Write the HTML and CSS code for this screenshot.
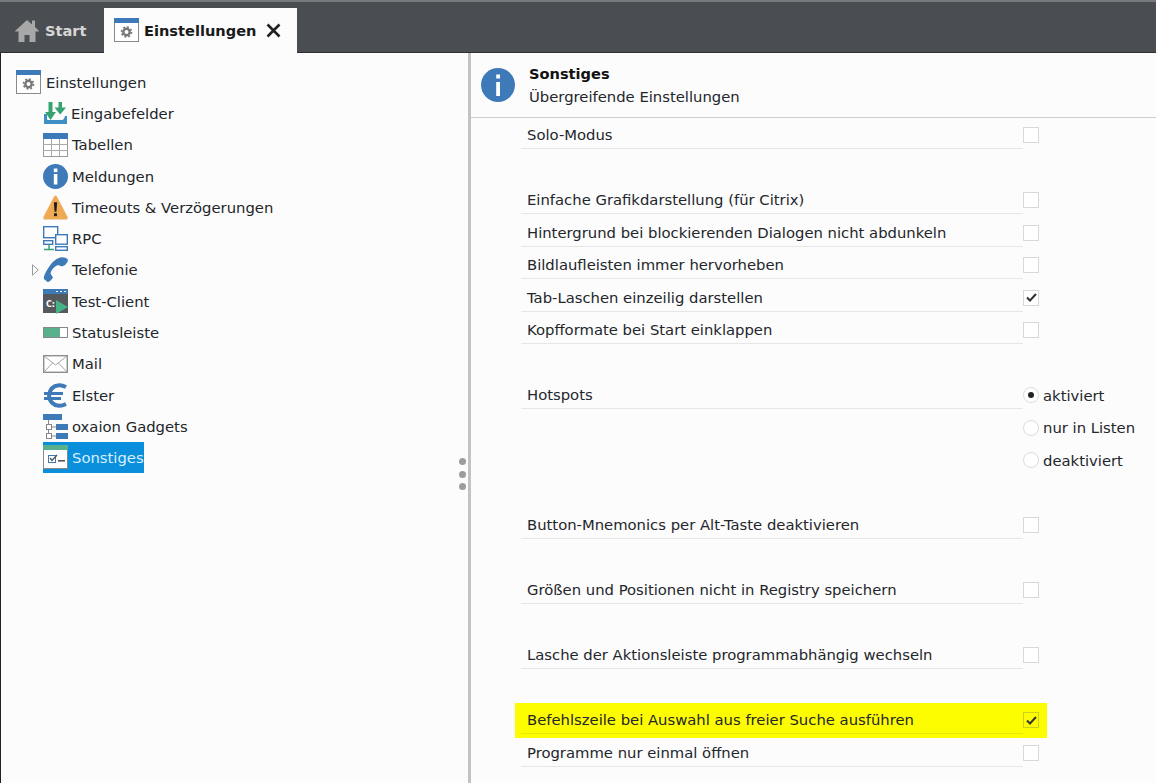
FILE: index.html
```html
<!DOCTYPE html>
<html lang="de">
<head>
<meta charset="utf-8">
<title>Einstellungen</title>
<link rel="stylesheet" href="styles.css">
</head>
<body>
<div class="app">
  <header class="tabbar">
    <div class="tab">
      <svg class="tab-icon" width="24" height="24" viewBox="0 0 24 24"><path fill="#a8a8a8" d="M12 2 L17 6.5 V2.5 H20 V9 L24.5 13.5 H20.5 V25 H14.5 V17 H9.5 V25 H3.5 V13.5 H-.5 Z"/></svg>
      <span>Start</span>
    </div>
    <div class="tab active">
      <svg class="tab-icon" width="25" height="24" viewBox="0 0 25 24"><rect x=".5" y=".5" width="24" height="23" fill="#fff" stroke="#8a8a8a"/><rect width="25" height="5" fill="#3f7ab8"/><circle cx="12.5" cy="14" r="3.2" fill="none" stroke="#777" stroke-width="2.4"/><circle cx="12.5" cy="14" r="5" fill="none" stroke="#777" stroke-width="1.6" stroke-dasharray="2 1.9"/></svg>
      <span>Einstellungen</span>
      <svg class="close" width="15" height="15" viewBox="0 0 15 15"><path d="M1.5 1.5 13.5 13.5 M13.5 1.5 1.5 13.5" stroke="#222" stroke-width="2.6" fill="none"/></svg>
    </div>
  </header>
  <main class="split">
    <nav class="tree">
      <div class="node root">
        <svg width="25" height="24" viewBox="0 0 25 24"><rect x=".5" y=".5" width="24" height="23" fill="#fff" stroke="#8a8a8a"/><rect width="25" height="5" fill="#3f7ab8"/><circle cx="12.5" cy="14" r="3.2" fill="none" stroke="#777" stroke-width="2.4"/><circle cx="12.5" cy="14" r="5" fill="none" stroke="#777" stroke-width="1.6" stroke-dasharray="2 1.9"/></svg>
        <span>Einstellungen</span>
      </div>
      <div class="node">
        <svg width="24" height="24" viewBox="0 0 24 24"><path fill="#3f8fc4" d="M1 13 H4 V18 Q4 19 5 19 H19 Q21 19 22 15 H24 V23 H1 Z"/><path fill="#35a36f" d="M5.5 1 H9.5 V11 H13 L7.5 19 L2 11 H5.5 Z"/><path fill="#35a36f" d="M15.5 1 H19 V6.5 H23 L17.2 13.5 L11.5 6.5 H15.5 Z"/></svg>
        <span>Eingabefelder</span>
      </div>
      <div class="node">
        <svg width="25" height="24" viewBox="0 0 25 24"><rect x=".5" y=".5" width="24" height="23" fill="#fff" stroke="#999"/><rect width="25" height="6" fill="#3f7ab8"/><path stroke="#aaa" fill="none" d="M8.5 6 V23 M16.5 6 V23 M0 11.5 H25 M0 17.5 H25"/></svg>
        <span>Tabellen</span>
      </div>
      <div class="node">
        <svg width="25" height="25" viewBox="0 0 25 25"><circle cx="12.5" cy="12.5" r="12.5" fill="#3f7ab8"/><rect x="10.8" y="10" width="3.6" height="10.5" fill="#fff"/><rect x="10.8" y="4.5" width="3.6" height="3.6" fill="#fff"/></svg>
        <span>Meldungen</span>
      </div>
      <div class="node">
        <svg width="25" height="25" viewBox="0 0 26 25"><path fill="#eeaa55" d="M13 0 Q14 0 15 2 L25.5 22 Q26 25 24 25 H2 Q0 25 .5 22 L11 2 Q12 0 13 0 Z"/><path fill="#1d1d1d" d="M11.3 7 H14.7 L14 17 H12 Z"/><rect x="11.5" y="18.5" width="3" height="3" fill="#1d1d1d"/></svg>
        <span>Timeouts &amp; Verzögerungen</span>
      </div>
      <div class="node">
        <svg width="25" height="25" viewBox="0 0 25 25"><g fill="#fff" stroke="#3f7ab8" stroke-width="1.4"><rect x=".7" y=".7" width="14" height="11"/><rect x="12.7" y="8.7" width="11.6" height="9.5"/><rect x=".7" y="14.7" width="9" height="3.6"/><rect x="12.7" y="20.7" width="11.6" height="3.6"/></g><path d="M6 18.5 V23 M1 23.5 H11" stroke="#35a36f" stroke-width="1.4" fill="none"/></svg>
        <span>RPC</span>
      </div>
      <div class="node">
        <svg class="twisty" width="7" height="12" viewBox="0 0 7 12"><path d="M.5 .8 6.3 6 .5 11.2 Z" fill="#fff" stroke="#999"/></svg>
        <svg width="25" height="25" viewBox="0 0 25 25"><path fill="#3f7ab8" d="M25 2.5 Q22 -.5 17 .5 Q10 2.5 4 13 Q0 20 1 22 L4.5 25 Q7 25 10 20.5 L7.5 16.5 Q7.5 14.5 10 11.5 Q12.5 8.5 15 8 L19 9.5 Q23 8 24.5 5 Z"/></svg>
        <span>Telefonie</span>
      </div>
      <div class="node">
        <svg width="25" height="25" viewBox="0 0 25 25"><rect width="25" height="24" fill="#55585c"/><rect width="25" height="5" fill="#3f7ab8"/><path fill="#fff" d="M13 2h2v1h-2zM17 2h2v1h-2zM21 2h2v1h-2z"/><text x="3" y="18" class="cmd">C:</text><path fill="#45b486" d="M13 11 L25 18 L13 25 Z"/></svg>
        <span>Test-Client</span>
      </div>
      <div class="node">
        <svg width="25" height="25" viewBox="0 0 25 25"><rect x=".5" y="7.5" width="24" height="10" fill="#fff" stroke="#888"/><rect x="1" y="8" width="16" height="9" fill="#58b08c"/></svg>
        <span>Statusleiste</span>
      </div>
      <div class="node">
        <svg width="25" height="25" viewBox="0 0 25 25"><rect x=".7" y="4.7" width="23.6" height="16.6" fill="#fff" stroke="#8d8d8d" stroke-width="1.4"/><path d="M1 5 12.5 14 24 5 M1 21 9.5 12 M24 21 15.5 12" fill="none" stroke="#a5a5a5"/></svg>
        <span>Mail</span>
      </div>
      <div class="node">
        <svg width="25" height="25" viewBox="0 0 25 25"><path fill="none" stroke="#3f7ab8" stroke-width="4" d="M23 4 Q19 2 16 2.2 Q7 3 6 12.5 Q7 22 16 22.8 Q19 23 23 21"/><path fill="#3f7ab8" d="M1 9 H20 V12 H1 Z M1 14 H18 V17 H1 Z"/></svg>
        <span>Elster</span>
      </div>
      <div class="node">
        <svg width="25" height="25" viewBox="0 0 25 25"><rect width="19" height="6" fill="#3f7ab8"/><rect x="13" y="10" width="12" height="6" fill="#3f7ab8"/><rect x="13" y="19" width="12" height="6" fill="#3f7ab8"/><path d="M5.5 6 V20 M9 13 H13 M9 22 H13" stroke="#888" fill="none"/><rect x="3.5" y="10.5" width="5" height="5" fill="#fff" stroke="#888"/><rect x="3.5" y="19.5" width="5" height="5" fill="#fff" stroke="#888"/></svg>
        <span>oxaion Gadgets</span>
      </div>
      <div class="node selected">
        <svg width="25" height="25" viewBox="0 0 25 25"><rect x=".5" y=".5" width="24" height="23" fill="#fff" stroke="#8a8a8a"/><rect width="25" height="5" fill="#58b08c"/><rect x="5.5" y="10.5" width="7" height="7" fill="none" stroke="#3f7ab8"/><path d="M7 13 9 15.5 14 10" stroke="#555" stroke-width="1.4" fill="none"/><rect x="15" y="15" width="7" height="1.6" fill="#555"/></svg>
        <span class="selected-label">Sonstiges</span>
      </div>
      <div class="gripper"><i></i><i></i><i></i></div>
    </nav>
    <section class="panel">
      <div class="panel-head">
        <svg width="34" height="34" viewBox="0 0 34 34"><circle cx="17" cy="17" r="17" fill="#3f7ab8"/><rect x="15.2" y="14" width="3.8" height="14" fill="#fff"/><rect x="15.2" y="6.5" width="3.8" height="4" fill="#fff"/></svg>
        <div class="head-text">
          <strong>Sonstiges</strong>
          <span>Übergreifende Einstellungen</span>
        </div>
      </div>
      <div class="form">
        <div class="row"><label>Solo-Modus</label><b class="box"></b></div>
        <div class="gap"></div>
        <div class="row"><label>Einfache Grafikdarstellung (für Citrix)</label><b class="box"></b></div>
        <div class="row"><label>Hintergrund bei blockierenden Dialogen nicht abdunkeln</label><b class="box"></b></div>
        <div class="row"><label>Bildlaufleisten immer hervorheben</label><b class="box"></b></div>
        <div class="row"><label>Tab-Laschen einzeilig darstellen</label><b class="box on"><svg width="11" height="9" viewBox="0 0 11 9"><path d="M1 4.5 4 7.5 10 1" fill="none" stroke="#333" stroke-width="2"/></svg></b></div>
        <div class="row"><label>Kopfformate bei Start einklappen</label><b class="box"></b></div>
        <div class="gap"></div>
        <div class="row"><label>Hotspots</label><div class="radio"><b class="dot on"></b>aktiviert</div></div>
        <div class="row"><label class="blank"></label><div class="radio"><b class="dot"></b>nur in Listen</div></div>
        <div class="row"><label class="blank"></label><div class="radio"><b class="dot"></b>deaktiviert</div></div>
        <div class="gap"></div>
        <div class="row"><label>Button-Mnemonics per Alt-Taste deaktivieren</label><b class="box"></b></div>
        <div class="gap"></div>
        <div class="row"><label>Größen und Positionen nicht in Registry speichern</label><b class="box"></b></div>
        <div class="gap"></div>
        <div class="row"><label>Lasche der Aktionsleiste programmabhängig wechseln</label><b class="box"></b></div>
        <div class="gap"></div>
        <div class="row mark"><label>Befehlszeile bei Auswahl aus freier Suche ausführen</label><b class="box on"><svg width="11" height="9" viewBox="0 0 11 9"><path d="M1 4.5 4 7.5 10 1" fill="none" stroke="#333" stroke-width="2"/></svg></b></div>
        <div class="row"><label>Programme nur einmal öffnen</label><b class="box"></b></div>
      </div>
    </section>
  </main>
</div>
</body>
</html>
```

FILE: styles.css
```css
* { box-sizing: border-box; }
html, body { margin: 0; height: 100%; }
body {
  font-family: "DejaVu Sans", sans-serif;
  font-size: 14.8px;
  color: #23262b;
  background: #fcfcfc;
  overflow: hidden;
}
.app { height: 783px; display: flex; flex-direction: column; }
.tabbar {
  height: 53px;
  flex: none;
  display: flex;
  align-items: flex-end;
  padding-left: 4px;
  background: #4a4d51;
  border-top: 2px solid #77797c;
  border-bottom: 1px solid #2d2f31;
}
.tab {
  height: 45px;
  margin-bottom: -1px;
  display: flex;
  align-items: center;
  gap: 6px;
  padding: 0 11px;
  color: #d6d6d6;
  font-weight: 700;
  font-size: 14.6px;
}
.tab:first-child { width: 100px; }
.tab.active {
  width: 193px;
  padding-left: 10px;
  gap: 5px;
  background: #fcfcfc;
  color: #1a1a1a;
}
.tab-icon { margin-top: -2px; }
.close { margin-left: 5px; }
.split { flex: 1; display: flex; min-height: 0; border-left: 1px solid #222; }
.tree {
  position: relative;
  width: 467px;
  flex: none;
  padding: 13.5px 0 0 15px;
}
.node {
  height: 31.3px;
  display: flex;
  align-items: center;
  gap: 4px;
  margin-left: 27px;
  position: relative;
}
.node svg { flex: none; }
.node.root { margin-left: 0; gap: 5px; }
.twisty { position: absolute; left: -11px; top: 10px; }
.selected { width: 101px; background: #0a8fdc; color: #d8efff; height: 31px; overflow: hidden; }
.cmd { font: 700 8px "DejaVu Sans", sans-serif; fill: #fff; }
.gripper {
  position: absolute;
  top: 405px;
  left: 458px;
  display: flex;
  flex-direction: column;
  gap: 5.5px;
}
.gripper i { width: 7px; height: 7px; border-radius: 50%; background: #9a9c9f; }
.panel {
  flex: 1;
  min-width: 0;
  border-left: 3px solid #c3c3c3;
}
.panel-head {
  height: 65px;
  display: flex;
  align-items: center;
  gap: 14px;
  padding: 0 0 0 10px;
  border-bottom: 1px solid #cfcfcf;
}
.head-text { display: flex; flex-direction: column; gap: 6px; line-height: 17px; }
.head-text strong { color: #111; font-size: 14.6px; }
.form { padding: 1px 0 0 50px; }
.gap { height: 32.5px; }
.row {
  height: 32.5px;
  display: flex;
  align-items: center;
}
.row label {
  width: 502px;
  height: 28px;
  padding: 4px 0 0 6px;
  border-bottom: 1px solid #e6e6e6;
  line-height: 20px;
}
.row label.blank { border-bottom: 0; }
.box {
  width: 16px;
  height: 16px;
  flex: none;
  display: flex;
  align-items: center;
  justify-content: center;
  border: 1px solid #d8d8d8;
  background: #fff;
}
.radio { display: flex; align-items: center; gap: 4px; white-space: nowrap; font-weight: 400; }
.dot {
  width: 16px;
  height: 16px;
  flex: none;
  display: flex;
  align-items: center;
  justify-content: center;
  border: 1px solid #dcdcdc;
  border-radius: 50%;
  background: #fff;
}
.dot.on::after { content: ""; width: 6px; height: 6px; border-radius: 50%; background: #222; }
.mark {
  margin-left: -6px;
  padding-left: 6px;
  width: 532px;
  height: 35px;
  margin-top: -1.25px;
  margin-bottom: -1.25px;
  background: #fdfd00;
}
.mark label { border-bottom-color: #e8e800; }
.mark .box { background: #fdfd00; border-color: #cfcf20; }
```
